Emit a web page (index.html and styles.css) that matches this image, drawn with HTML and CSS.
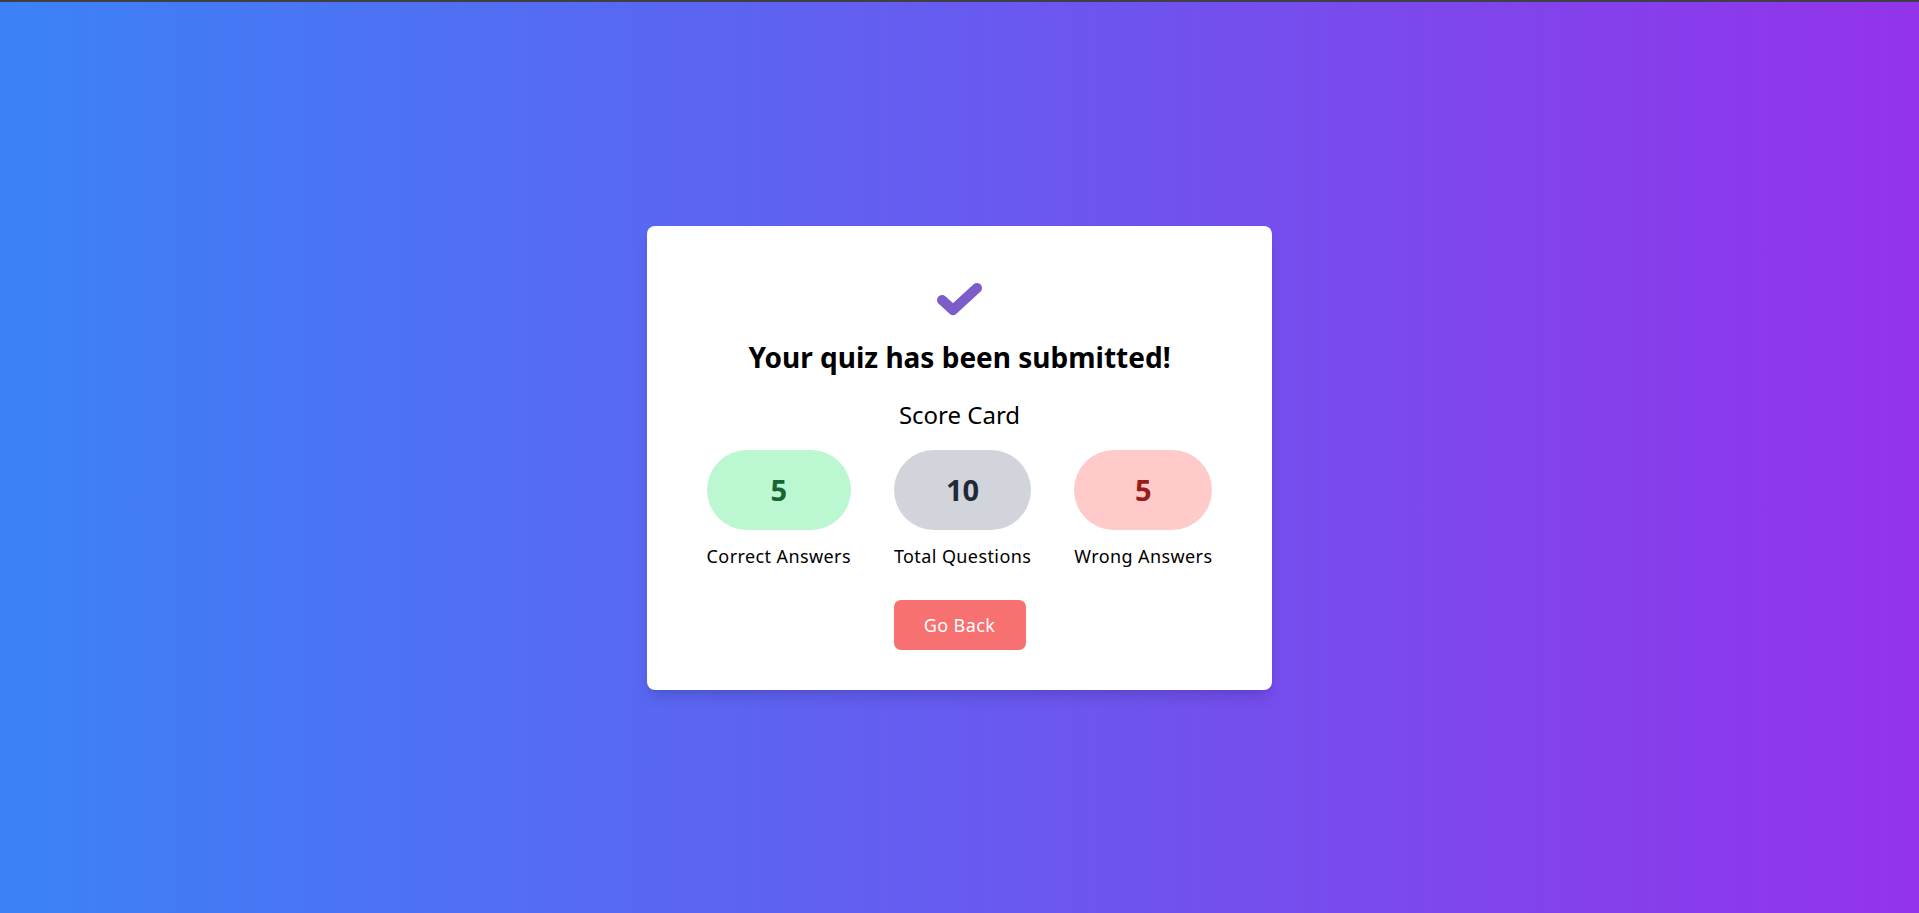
FILE: index.html
```html
<!DOCTYPE html>
<html lang="en">
<head>
<meta charset="utf-8">
<title>Quiz Submitted</title>
<link rel="stylesheet" href="styles.css">
</head>
<body>
<main class="page">
  <section class="card">
    <svg class="check" width="46" height="33" viewBox="0 0 46 33" aria-hidden="true">
      <path d="M5 17 L16 27 L40 5" fill="none" stroke="#7c5cc9" stroke-width="10" stroke-linecap="round" stroke-linejoin="round"/>
    </svg>
    <h1 class="title">Your quiz has been submitted!</h1>
    <h2 class="subtitle">Score Card</h2>
    <div class="scores">
      <div class="score">
        <div class="pill pill-green">5</div>
        <div class="label">Correct Answers</div>
      </div>
      <div class="score">
        <div class="pill pill-gray">10</div>
        <div class="label">Total Questions</div>
      </div>
      <div class="score">
        <div class="pill pill-red">5</div>
        <div class="label">Wrong Answers</div>
      </div>
    </div>
    <button class="back" type="button">Go Back</button>
  </section>
</main>
</body>
</html>
```
FILE: styles.css
```css
* { box-sizing: border-box; }
html, body { margin: 0; padding: 0; }
body {
  font-family: "Segoe UI", "Noto Sans", "Open Sans", sans-serif;
  border-top: 2px solid #3f3f46;
  background: linear-gradient(to right, #3b82f6, #9333ea);
  min-height: 100vh;
}
.page {
  min-height: calc(100vh - 2px);
  display: flex;
  align-items: center;
  justify-content: center;
}
.card {
  width: 625px;
  background: #fff;
  border-radius: 8px;
  box-shadow: 0 10px 15px -3px rgba(0,0,0,0.12), 0 4px 6px -2px rgba(0,0,0,0.06);
  padding: 57px 40px 40px;
  display: flex;
  flex-direction: column;
  align-items: center;
}
.check { display: block; }
.title {
  margin: 23px 0 0;
  font-size: 28px;
  line-height: 36px;
  font-weight: 700;
  color: #000;
}
.subtitle {
  margin: 24px 0 0;
  font-size: 24px;
  line-height: 32px;
  font-weight: 400;
  color: #000;
}
.scores {
  margin-top: 19px;
  display: flex;
  gap: 43px;
}
.score {
  display: flex;
  flex-direction: column;
}
.pill {
  height: 80px;
  border-radius: 40px;
  display: flex;
  align-items: center;
  justify-content: center;
  font-size: 29px;
  font-weight: 700;
}
.pill-green { background: #bbf7d0; color: #166534; }
.pill-gray { background: #d1d5db; color: #1f2937; }
.pill-red { background: #fecaca; color: #991b1b; }
.label {
  margin-top: 12px;
  font-size: 18px;
  letter-spacing: 0.4px;
  line-height: 28px;
  color: #000;
  text-align: center;
}
.back {
  margin-top: 30px;
  width: 132px;
  height: 50px;
  border: 0;
  border-radius: 7px;
  background: #f87171;
  color: #fff;
  font-family: inherit;
  font-size: 18px;
  letter-spacing: 0.4px;
  cursor: pointer;
}
```
